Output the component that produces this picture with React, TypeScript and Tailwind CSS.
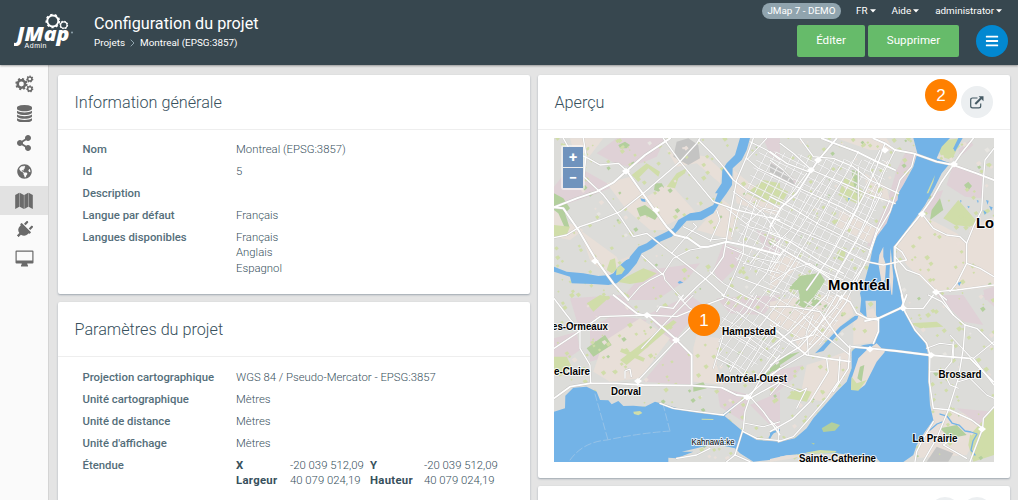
import React from 'react';
import { FaShareAlt, FaPlug, FaBars, FaGlobeAmericas } from 'react-icons/fa';

type Pt = string;

function Gear({ cx, cy, r, teeth, w }: { cx: number; cy: number; r: number; teeth: number; w: number }) {
  const unit = (2 * Math.PI * (r + w / 2)) / (teeth * 2);
  return (
    <g fill="none" stroke="currentColor">
      <circle cx={cx} cy={cy} r={r} strokeWidth={w} />
      <circle cx={cx} cy={cy} r={r + w / 2} strokeWidth={w * 0.95} strokeDasharray={`${unit} ${unit}`} />
    </g>
  );
}

function CogsIcon() {
  return (
    <svg width="19" height="18" viewBox="0 0 19 18" className="mb-[2px]">
      <Gear cx={6.4} cy={9} r={3.7} teeth={8} w={2.5} />
      <Gear cx={14.8} cy={4} r={2.1} teeth={7} w={1.5} />
      <Gear cx={14.8} cy={13.8} r={2.1} teeth={7} w={1.5} />
    </svg>
  );
}

function DatabaseIcon() {
  return (
    <svg width="15" height="17.5" viewBox="0 0 1536 1792" fill="currentColor">
      <path d="M768 768q237 0 443-43t325-127v170q0 69-103 128t-280 93.5-385 34.5-385-34.5-280-93.5-103-128v-170q119 84 325 127t443 43zm0 768q237 0 443-43t325-127v170q0 69-103 128t-280 93.5-385 34.5-385-34.5-280-93.5-103-128v-170q119 84 325 127t443 43zm0-384q237 0 443-43t325-127v170q0 69-103 128t-280 93.5-385 34.5-385-34.5-280-93.5-103-128v-170q119 84 325 127t443 43zm0-1152q208 0 385 34.5t280 93.5 103 128v128q0 69-103 128t-280 93.5-385 34.5-385-34.5-280-93.5-103-128v-128q0-69 103-128t280-93.5 385-34.5z" />
    </svg>
  );
}

function MapIcon() {
  return (
    <svg width="18" height="18" viewBox="0 0 18 18" fill="currentColor">
      <path d="M0.2 3 4.3.8v14L.2 17zM4.700.800 8.900 3v14l-4.200-2.200zM9.300 3 13.200.8v14L9.300 17zM13.600.8 17.8 3v14l-4.2-2.2z" />
    </svg>
  );
}

function DesktopIcon() {
  return (
    <svg width="19" height="17" viewBox="0 0 19 17" fill="currentColor">
      <path fillRule="evenodd" d="M1.6.5h15.8q1.1 0 1.1 1.1v10.8q0 1.1-1.1 1.1h-5.2q.2 1.3.8 2v1H6v-1q.6-.7.8-2H1.6Q.5 13.500.5 12.400V1.600Q.5.5 1.600.5zM1.700 1.700v8.800h15.600V1.700z" />
    </svg>
  );
}

function ExternalIcon() {
  return (
    <svg width="14" height="13" viewBox="0 0 14 13" fill="none" stroke="#455a64">
      <path d="M7.500 2H2.600Q.7 2 .7 3.900v6Q.7 11.800 2.600 11.800h6.200q1.900 0 1.900-1.900V7.500" strokeWidth="1.200" />
      <path d="M5.300 8 11 2.300" strokeWidth="2" />
      <path d="M8.600.3h4.900v4.900z" fill="#455a64" stroke="none" />
    </svg>
  );
}

function Logo() {
  return (
    <svg width="64" height="40" viewBox="0 0 64 40" className="text-white">
      <Gear cx={38.800} cy={9} r={5.500} teeth={9} w={1.900} />
      <Gear cx={49.800} cy={13} r={3.200} teeth={8} w={1.200} />
      <g fill="#fff" stroke="#37474f" strokeWidth="1.600" paintOrder="stroke" fontFamily="'Open Sans', sans-serif" fontWeight="800" fontStyle="italic">
        <text x="2.500" y="29" fontSize="20" textLength="53" lengthAdjust="spacingAndGlyphs">JMap</text>
      </g>
      <circle cx="58" cy="20.500" r="1" fill="#90a4ae" />
      <text x="10.500" y="36.300" fontSize="7" fill="#fff" fontFamily="'Liberation Sans', sans-serif" textLength="22">Admin</text>
    </svg>
  );
}

/* ---------- map ---------- */

const PINK = '#dfd1d6';
const BEIGE = '#e8dfd8';
const LIME = '#d0dda9';
const GREEN = '#b3cf9d';
const WATER = '#73b3e7';

const quadrants = [
  { x: 550, y: 130 },
  { x: 770, y: 130 },
  { x: 550, y: 295 },
  { x: 770, y: 295 },
];

const areas: [string, Pt][][] = [
  [
    [PINK, '200,25 345,25 320,80 285,95 235,110 195,100 140,70'],
    [PINK, '12,170 60,110 110,125 190,170 130,195 12,235'],
    [BEIGE, '60,25 160,25 110,90 70,60'],
    [BEIGE, '350,60 470,80 515,120 510,160 440,100 380,110'],
    [BEIGE, '170,160 240,140 330,240 350,300 300,300 230,240'],
    [BEIGE, '12,240 60,280 100,300 60,330 12,320'],
    [BEIGE, '90,300 200,380 230,450 180,440 120,390'],
    [BEIGE, '360,160 440,250 400,260 340,290 290,200'],
    [PINK, '290,420 450,400 410,450 320,510 210,510'],
    [PINK, '520,340 580,360 560,410 510,460 490,420'],
    [PINK, '620,300 690,330 690,380 640,360'],
    [PINK, '640,25 690,25 690,95 660,75'],
    [BEIGE, '550,120 600,160 690,210 690,260 560,220'],
    [BEIGE, '520,210 570,250 545,330 440,300'],
    ['#c4c4c3', '380,35 415,25 445,45 450,85 415,105 370,80'],
    [GREEN, '260,235 285,225 325,255 315,270 285,255 270,260'],
    [GREEN, '12,190 40,205 60,235 45,250 58,290 45,295 25,250 12,240'],
    [GREEN, '205,45 225,35 240,45 230,55 210,55'],
    [GREEN, '315,160 335,160 342,172 325,185 312,180'],
    [LIME, '245,135 290,100 330,125 325,140 295,115 260,150'],
    [LIME, '12,285 60,290 50,315 12,320'],
    [LIME, '350,170 380,130 410,115 405,130 385,145 375,175'],
    [LIME, '200,455 280,415 320,430 280,455 240,462'],
    [LIME, '590,190 640,150 690,160 690,225 640,215'],
    [LIME, '170,420 180,390 195,385 200,420 185,430'],
  ],
  [
    [PINK, '0,95 80,150 70,170 0,120'],
    ['#c4c4c3', '0,98 60,135 75,165 0,125'],
    [LIME, '0,160 55,185 35,220 0,215'],
    [PINK, '410,60 440,80 400,165 365,255 310,345 290,350 350,220 380,120'],
    [BEIGE, '200,25 350,25 370,60 300,60'],
    [LIME, '225,140 285,185 270,225 205,195'],
    [GREEN, '245,120 270,125 262,200 248,150'],
    [BEIGE, '285,130 350,170 360,215 290,200'],
    [BEIGE, '210,240 320,290 300,340 200,290'],
    [PINK, '550,100 640,135 635,205 585,200 530,165'],
    [PINK, '490,190 520,180 490,260 460,240'],
    [PINK, '565,60 600,30 610,45 570,80'],
    [LIME, '565,210 625,280 600,290 555,285 520,265'],
    [GREEN, '510,205 520,240 480,270 485,240'],
    [GREEN, '582,165 595,155 606,168 594,182'],
    [BEIGE, '455,255 560,310 595,340 600,290 672,260 672,470 500,490 410,405 380,350'],
    [LIME, '505,60 530,30 575,25 555,70 545,90 515,80'],
    [BEIGE, '495,80 520,75 528,105 500,115'],
    [GREEN, '55,475 90,440 150,430 165,455 130,510 90,510 85,480'],
    [LIME, '200,370 215,350 230,355 220,395 200,385'],
    [BEIGE, '0,400 70,370 90,405 40,450 0,480'],
    [PINK, '640,480 672,470 672,510 645,510'],
  ],
  [
    [PINK, '60,10 210,0 270,60 180,60 130,75 90,110'],
    [PINK, '290,60 420,0 460,30 380,130 430,180 425,270 280,260 370,150'],
    [PINK, '12,130 80,110 90,165 12,220'],
    [PINK, '120,100 190,60 290,75 220,170 120,200'],
    [BEIGE, '160,140 270,70 360,130 270,250 180,260 130,230'],
    [BEIGE, '440,120 510,130 500,210 520,270 430,260 430,160'],
    [PINK, '500,275 600,300 580,380 510,335'],
    [PINK, '500,10 690,0 640,60 540,55'],
    [LIME, '110,25 150,0 180,5 130,50'],
    [GREEN, '110,160 165,120 185,150 130,185'],
    [LIME, '210,195 370,75 380,82 230,210'],
    [LIME, '215,160 285,190 280,200 210,170'],
    [LIME, '12,185 50,185 65,215 30,245 12,230'],
    [GREEN, '430,270 460,262 470,280 430,290'],
    [PINK, '600,330 690,290 690,400 660,390'],
    [GREEN, '640,240 690,205 690,220 650,250'],
  ],
  [
    [BEIGE, '0,20 120,0 240,0 250,60 180,120 100,180 60,110 0,90'],
    [GREEN, '75,25 100,0 140,0 155,30 100,38'],
    [PINK, '0,230 100,210 70,250 0,310'],
    [BEIGE, '110,210 175,190 240,165 240,230 170,320 90,310'],
    [LIME, '50,310 80,280 125,290 110,320'],
    [GREEN, '0,220 50,180 90,170 30,210 0,235'],
    [BEIGE, '250,60 310,40 325,80 315,140 250,150'],
    [PINK, '500,0 580,0 640,90 580,80'],
    [BEIGE, '480,340 620,360 640,400 590,480 430,490'],
    [PINK, '560,340 670,350 630,390'],
    [GREEN, '510,400 560,390 590,420 540,430'],
    [LIME, '600,420 672,340 672,480 610,500 595,450'],
    ['#c4c4c3', '500,455 550,475 535,500 470,500'],
    [LIME, '420,85 500,80 520,95 450,100'],
    [PINK, '635,0 672,0 672,35'],
  ],
];

const roads: [number, Pt][][] = [
  [
    [3.200, '12,232 80,205 140,185 190,158 230,122 285,75 360,25'],
    [3.200, '12,232 40,235 85,300 135,385 190,460 235,510'],
    [3.200, '230,122 260,165 310,235 350,290 375,315 415,325 450,350 475,350 530,335 580,345 690,375'],
    [2, '40,25 60,60 115,85 150,105 205,100 230,122'],
    [2, '100,25 108,75 102,140 160,195 210,260 250,320 290,310 340,350 385,385 470,450 520,495'],
    [2, '12,323 50,315 90,290 150,270 210,245 280,190 390,95 440,40 450,25'],
    [2, '340,25 390,95 440,155 490,215 560,240 690,270'],
    [2, '445,30 490,75 520,110 550,150 590,180 690,235'],
    [2, '610,25 590,80 560,150 545,230 530,325 520,380 485,430 440,470 400,510'],
    [1.500, '590,85 625,115 690,145'],
    [1.500, '590,90 650,25'],
    [1.500, '600,35 650,60 690,90'],
    [1.500, '475,350 420,360 370,385 340,430 300,450 270,470 235,510'],
    [1.500, '340,430 345,450 400,510'],
    [1.500, '275,375 340,435'],
    [1.500, '365,370 400,330 440,290 430,280'],
    [1.500, '400,290 440,310 480,330 530,325'],
    [1.500, '480,425 520,460 580,495 610,510'],
    [1.500, '500,240 510,270 480,335'],
    [1.500, '575,210 560,260 545,320'],
    [1.500, '620,210 580,330 580,370 550,440 520,500'],
    [1.500, '530,235 600,290 690,315'],
    [1.500, '590,280 640,235 690,245'],
    [1.500, '550,185 640,250 690,320'],
    [1.500, '530,350 600,380 690,400'],
    [1.500, '670,270 640,350 600,400'],
    [1.500, '580,400 690,430'],
    [1.500, '690,330 650,430 600,490'],
    [1.500, '560,440 690,490'],
  ],
  [
    [3, '200,25 145,90 125,120 80,190 35,230 0,290'],
    [3, '155,25 180,35 260,65 320,95 375,120'],
    [3, '310,25 345,40 375,60 430,70 500,95 550,105 620,130 672,150'],
    [2, '90,25 130,80 190,85 250,110 300,150 385,190'],
    [2, '30,40 70,70 125,120 220,160 300,195 375,220'],
    [2, '0,65 50,100 115,125'],
    [2, '0,130 100,180 210,230 330,300'],
    [2, '0,200 60,230 150,285 300,360'],
    [2, '0,260 80,300 190,345 290,395'],
    [2, '0,310 60,335 160,400 220,430'],
    [2, '0,335 90,390 150,425 200,460'],
    [2, '345,40 320,110 280,200 230,290 180,380 110,480'],
    [1.500, '375,60 340,130 300,240 260,330 200,430 170,510'],
    [1.500, '330,60 300,120 330,170'],
    [1.500, '265,65 230,130 180,210 130,300 70,400 0,500'],
    [1.500, '220,95 160,190 100,280 30,380 0,430'],
    [1.500, '180,120 120,200 60,300 10,350'],
    [1.500, '110,130 50,210'],
    [1.500, '265,110 265,230 230,300'],
    [1.500, '335,190 300,260 250,350 180,470'],
    [1.500, '70,150 40,120 0,90'],
    [1.500, '360,210 320,300 290,390 230,510'],
    [2, '435,70 425,110 390,150 360,245 320,310 300,370 280,410 210,510'],
    [2.500, '610,25 570,75 550,105 515,155 490,200 455,250 410,305 375,350 375,410 400,510'],
    [2, '672,55 645,90 640,150 635,240 610,290 590,340 590,400 560,460 540,485'],
    [2, '455,250 490,295 530,315 570,320 590,340'],
    [2, '375,380 410,420 450,435 500,485 560,480 672,465'],
    [2, '590,400 630,415 672,440'],
    [2, '290,395 340,405 410,390 395,365 375,350'],
    [2, '500,485 530,510'],
    [1.500, '0,415 40,360 130,410 220,450'],
    [1.500, '0,460 60,420 120,400 180,440'],
  ],
  [
    [3, '190,0 260,55 300,65 375,130 425,180 425,270'],
    [3, '12,310 60,275 120,265 200,265 280,270 430,272 515,278 560,300 600,305'],
    [2, '12,10 50,60 90,110 90,160 120,210 122,265'],
    [2, '12,160 80,115 150,65 290,60 380,65 440,40 520,10'],
    [2, '460,60 375,140 265,255 262,270'],
    [1.500, '275,160 350,80 410,20 430,0'],
    [2, '320,50 330,35 370,40 400,0'],
    [1.500, '385,5 420,40 460,60 520,100 620,160'],
    [2, '515,0 560,20 640,60 690,95'],
    [2, '690,180 640,240 600,305 585,350 580,400 555,480'],
    [2, '600,305 640,350 690,420'],
    [2, '520,360 590,305 690,220'],
    [2, '600,310 690,260'],
    [1.500, '490,220 520,120 590,50 620,0'],
    [1.500, '500,190 560,220 600,260 690,240'],
    [1.500, '540,230 600,130 680,30'],
    [1.500, '580,240 640,140 690,80'],
    [1.500, '620,250 690,150'],
    [1.500, '530,100 600,130 680,190'],
    [1.500, '560,50 640,110 690,130'],
    [2, '580,410 620,430 690,437'],
    [1.500, '585,385 640,395 690,380'],
    [2, '380,490 440,480 480,460'],
    [2, '555,480 530,500'],
    [2, '555,480 600,500'],
    [2, '225,250 225,228 240,222 244,245'],
    [2, '330,325 370,340 440,350 520,360'],
  ],
  [
    [2.500, '200,0 240,20 260,55 290,70 325,75'],
    [3, '285,78 330,68 395,38 410,0'],
    [2.800, '245,155 300,160 380,168 475,180 600,190 670,260'],
    [2.300, '395,0 405,50 435,105 470,145 480,180 478,260 490,340 540,345 605,375 638,400 600,500'],
    [2.500, '325,70 325,110 310,145'],
    [2.500, '10,100 60,140 110,180 170,190 240,200'],
    [2, '0,90 60,140 130,120 200,0'],
    [2, '0,160 60,110 150,20 170,0'],
    [2, '0,210 90,155 200,30 215,0'],
    [2, '0,240 100,180 150,130 230,20'],
    [2, '170,190 175,230 120,320 70,370 0,410'],
    [2, '210,185 205,260 170,310 110,380 70,425 25,440'],
    [2, '240,150 235,220 190,290'],
    [2, '0,35 60,35 150,50 200,120 240,160'],
    [1.500, '100,65 160,120 240,180'],
    [1.500, '130,60 110,110 115,180'],
    [1.500, '0,300 30,265 0,250'],
    [1.500, '30,265 90,290 110,280 80,340'],
    [1.500, '25,435 25,400 0,375'],
    [2, '510,0 550,60 585,90 620,100 672,150'],
    [2, '475,0 515,20 550,60'],
    [1.500, '540,120 600,185 610,190 672,140'],
    [2, '405,40 460,40 490,0'],
    [2, '585,90 580,160 565,250 535,345 500,430 460,500'],
    [1.500, '470,160 510,145 550,150 550,190'],
    [1.500, '480,230 520,230 545,200 550,140'],
    [1.500, '565,260 600,250 650,300 672,310'],
    [1.500, '520,230 540,270 565,280'],
    [2, '672,335 640,370 638,400'],
    [2, '550,430 520,450 590,490'],
    [2, '490,380 460,430 440,470 435,500'],
    [2, '610,190 672,270'],
  ],
];

const waters: Pt[][] = [
  [
    '12,410 50,425 100,430 145,438 180,435 190,430 205,410 240,380 265,350 290,340 310,325 350,305 370,295 385,270 420,250 450,245 490,225 503,190 495,190 515,160 517,120 530,100 555,75 570,24 600,24 590,60 575,90 548,115 546,165 530,190 515,210 490,250 455,270 410,272 385,300 365,320 330,335 305,355 275,370 260,400 235,430 200,460 175,465 130,462 65,460 60,440 12,425',
    '271,205 285,208 287,216 275,214',
    '383,457 390,452 400,458 387,461',
  ],
  [
    '430,24 442,70 430,110 400,165 385,190 383,210 370,225 350,280 320,320 310,345 300,395 285,450 270,490 275,512 400,512 385,460 370,400 370,350 385,335 410,300 440,260 465,225 495,170 515,130 540,100 500,85 515,50 540,24',
    '565,24 578,24 555,65 550,55',
    '570,210 575,212 572,218', '620,210 626,212 624,220', '648,210 656,212 653,224', '657,228 668,232 664,242', '592,227 600,230 595,235', '640,240 650,248 644,254', '234,203 240,205 236,213', '562,458 574,455 568,468',
  ],
  [
    '12,350 45,340 46,302 70,278 110,275 140,290 150,315 175,316 185,328 205,318 220,333 250,332 285,335 315,320 350,330 400,345 470,355 520,360 580,410 620,435 690,440 690,491 610,500 570,475 555,460 520,452 480,450 430,462 395,470 430,470 380,490 355,488 355,501 12,501',
    '515,360 560,325 562,328 525,362', '655,430 665,410 690,402 690,408 670,415 660,432',
  ],
  [
    '275,-1 270,50 290,68 285,0 318,-1 318,60 325,75 325,110 315,145 280,150 255,160 245,170 245,220 230,260 200,290 165,330 130,370 110,400 75,430 30,440 0,440 0,490 60,480 110,475 200,475 240,480 320,490 330,501 400,501 430,480 440,450 465,410 490,375 480,330 475,250 475,180 465,140 430,100 410,60 400,25 395,-1',
    '150,160 210,95 255,62 265,62 262,72 215,105 160,168 135,175',
    '0,412 22,405 5,420 0,420',
  ],
];

const islands: [string, Pt][][] = [
  [[LIME, '200,415 212,405 225,418 215,432 198,436'], ['#e6ddd6', '208,390 240,378 238,386 215,395']],
  [
    [BEIGE, '340,350 328,375 325,400 335,460 345,450 348,405 340,380'],
    [BEIGE, '362,355 358,440 366,510 370,440'],
    [LIME, '470,190 495,135 490,155 475,190'],
  ],
  [[LIME, '250,350 270,348 277,354 265,361 252,357'], [LIME, '455,371 490,372 490,375 455,374']],
  [
    [BEIGE, '265,190 290,165 320,145 345,170 320,200 300,240 285,270 265,285 243,285 245,250'],
    [GREEN, '270,215 283,210 275,260 262,250'],
    [LIME, '245,245 260,265 290,255 265,287 243,285'],
    [GREEN, '155,400 185,382 210,390 195,407 160,411'],
    [LIME, '105,473 150,465 200,468 195,473 130,476'],
    [BEIGE, '0,492 50,481 100,480 70,490 0,501'],
    [GREEN, '123,443 134,445 132,449'],
  ],
];

function buildSpecks() {
  let seed = 71;
  const rnd = () => {
    seed = (seed * 16807) % 2147483647;
    return seed / 2147483647;
  };
  return Array.from({ length: 820 }, () => {
    const x = 554 + rnd() * 440;
    const y = 138 + rnd() * 324;
    const s = 1.100 + rnd() * 2.400;
    const t = rnd();
    const d = `M${x} ${y}l${s} ${-s * 0.6}l${s * 0.7} ${s * 0.8}l${-s * 0.9} ${s * 0.8}z`;
    return { d, c: t < 0.72 ? LIME : t < 0.82 ? GREEN : t < 0.94 ? '#e9dfd9' : '#e7e5e1' };
  });
}
const specks = buildSpecks();

function gridLines(x: number, y: number, w: number, h: number, slope: number, gap: number) {
  const steps = Math.ceil((h + Math.abs(slope) * w) / gap);
  const start = slope > 0 ? y - slope * w : y;
  return Array.from({ length: steps }, (_, i) => `M${x} ${start + i * gap}l${w} ${slope * w}`).join('');
}
const streets = [
  { clip: 'city-n', d: gridLines(730, 138, 180, 170, 0.5, 9) + gridLines(730, 138, 180, 170, -1.900, 17), o: 0.75 },
  { clip: 'city-s', d: gridLines(715, 290, 135, 110, -1.350, 14) + gridLines(715, 290, 135, 110, 0.600, 13), o: 0.75 },
];

const streams = [
  '940,414 947,416 952,423 959,425 965,431 971,432 977,434 973,441 971,450 975,455',
  '930,430 937,424 942,422',
];

const labels: [string, number, number, number, number][] = [
  ['Montréal', 828, 290, 14, 62],
  ['Lo', 976, 227.500, 14, 18],
  ['es-Ormeaux', 552, 330, 10.500, 56],
  ['Hampstead', 722, 335, 10.500, 54],
  ['e-Claire', 554, 375, 10.500, 36],
  ['Dorval', 611, 394.500, 10.500, 30],
  ['Montréal-Ouest', 716, 382, 10.500, 71],
  ['Brossard', 938.500, 378, 10.500, 43],
  ['La Prairie', 912.500, 442, 10.500, 45],
  ['Sainte-Catherine', 799, 461.500, 10.500, 77],
];

function CityMap() {
  return (
    <svg width="440" height="324" viewBox="554 138 440 324" className="block" strokeLinejoin="round" strokeLinecap="round">
      <clipPath id="city-n"><polygon points="760,150 850,160 890,160 875,215 860,270 835,300 790,300 735,260 745,190" /></clipPath>
      <clipPath id="city-s"><polygon points="725,300 765,290 845,290 838,320 820,345 790,350 740,372 715,365" /></clipPath>
      <rect x="554" y="138" width="440" height="324" fill="#dcdcd9" />
      {quadrants.map((q, i) => (
        <g key={i} transform={`translate(${q.x} ${q.y}) scale(.33333)`}>
          {areas[i].map(([c, p], k) => <polygon key={k} points={p} fill={c} />)}
        </g>
      ))}
      {specks.map((s, i) => <path key={i} d={s.d} fill={s.c} />)}
      {streets.map((s) => (
        <g key={s.clip} clipPath={`url(#${s.clip})`} fill="none" opacity={s.o}>
          <path d={s.d} stroke="#cbcac8" strokeWidth="1.700" />
          <path d={s.d} stroke="#fff" strokeWidth="1" />
        </g>
      ))}
      <path d="M789 289L800 276 820 273 825 281 813 298 800 303 799 290Z" fill={GREEN} />
      {quadrants.map((q, i) => (
        <g key={i} transform={`translate(${q.x} ${q.y}) scale(.33333)`}>
          {waters[i].map((p, k) => <polygon key={k} points={p} fill={WATER} />)}
          {islands[i].map(([c, p], k) => <polygon key={k} points={p} fill={c} />)}
        </g>
      ))}
      {streams.map((p) => <polyline key={p} points={p} fill="none" stroke={WATER} strokeWidth="1.300" />)}
      <g fill="none" stroke="#a5c9e6" strokeWidth=".7" strokeDasharray="7 3">
        <path d="M570 460Q583 442 607 440Q640 433 671 431" />
        <path d="M595 394L608 440M663 404L670 431" />
      </g>
      {['#c6c5c3', '#ffffff'].map((c, pass) =>
        quadrants.map((q, i) => (
          <g key={c + i} transform={`translate(${q.x} ${q.y}) scale(.33333)`} fill="none" stroke={c}>
            {roads[i].map(([w, p], k) => (
              <polyline key={k} points={p} strokeWidth={w * 1.700 + (pass === 0 ? 2.800 : 0.600)} />
            ))}
          </g>
        ))
      )}
      <g fill="#fff">
        {['595,261', '626,171', '656,210', '818,160', '811,170', '885,150', '922,214', '954,164', '647,315', '676,340', '870,349', '903,308', '931,355', '936,292', '982,429', '747,397', '638,381'].map((p) => {
          const [x, y] = p.split(',').map(Number);
          return <path key={p} d={`M${x - 4} ${y}L${x} ${y - 3}L${x + 4} ${y}L${x} ${y + 3.500}z`} />;
        })}
      </g>
      <g fontFamily="'Liberation Sans', Arial, sans-serif" fontWeight="700" stroke="#fff" strokeOpacity=".8" strokeWidth="2" paintOrder="stroke" fill="#000">
        {labels.map(([t, x, y, s, w]) => (
          <text key={t} x={x} y={y} fontSize={s} textLength={w} lengthAdjust="spacingAndGlyphs">{t}</text>
        ))}
        <text x="691.500" y="445" fontSize="8.500" fontWeight="400" textLength="43" lengthAdjust="spacingAndGlyphs">Kahnawà:ke</text>
      </g>
    </svg>
  );
}

/* ---------- page ---------- */

function Card({ title, className = '', children, action }: { title: string; className?: string; children: React.ReactNode; action?: React.ReactNode }) {
  return (
    <section className={`rounded-[2px] bg-white shadow-[0_1px_2px_rgba(70,90,110,0.45)] ${className}`}>
      <div className="flex h-[55px] items-center justify-between border-b border-[#eeeeee] pr-[17px] pl-[16.500px]">
        <h2 className="pt-[2px] text-[16.200px] font-light text-[#37505c]">{title}</h2>
        {action}
      </div>
      {children}
    </section>
  );
}

function Row({ label, children }: { label: string; children?: React.ReactNode }) {
  return (
    <div className="flex min-h-[22px] text-[11.330px] leading-[15.300px]">
      <dt className="w-[153.500px] shrink-0 font-medium text-[#546e7a]">{label}</dt>
      <dd className="font-light text-[#37505c]">{children}</dd>
    </div>
  );
}

function Menu({ text, className }: { text: string; className: string }) {
  return (
    <span className={`flex items-center gap-[2px] ${className}`}>
      {text}
      <svg width="6" height="4" viewBox="0 0 6 4" fill="currentColor"><path d="M0 .3h6L3 3.500z" /></svg>
    </span>
  );
}

const nav = [
  <CogsIcon />,
  <DatabaseIcon />,
  <FaShareAlt size={16} />,
  <FaGlobeAmericas size={15} />,
  <MapIcon />,
  <FaPlug size={18} className="rotate-45" />,
  <DesktopIcon />,
];

export default function App() {
  return (
    <div className="flex h-[500px] w-[1018px] flex-col overflow-hidden bg-[#e4e4e4] font-['Roboto',sans-serif]">
      <header className="z-10 flex h-[65px] shrink-0 bg-[#37474f] text-white shadow-[0_1px_2px_rgba(0,0,0,0.35)]">
        <div className="w-[94px] pt-[12px] pl-[14px]"><Logo /></div>
        <div className="flex-1 pt-[13px]">
          <h1 className="text-[16.200px] leading-[22px]">Configuration du projet</h1>
          <div className="mt-[1px] flex items-center text-[9.900px] leading-[14px]">
            Projets
            <svg width="5" height="8" viewBox="0 0 5 8" className="mx-[5px]" fill="none" stroke="#90a4ae"><path d="M.7.7 4 4 .7 7.300" /></svg>
            Montreal (EPSG:3857)
          </div>
        </div>
        <div className="flex flex-col items-end pr-[10px]">
          <div className="mt-[3px] flex h-[16px] items-center pr-[6px] text-[9.900px]">
            <span className="flex h-[16px] w-[79px] items-center justify-center rounded-full bg-[#90a4ae]">JMap 7 - DEMO</span>
            <Menu text="FR" className="ml-[15px]" />
            <Menu text="Aide" className="ml-[16px]" />
            <Menu text="administrator" className="ml-[16px]" />
          </div>
          <div className="mt-[6px] flex h-[32px] text-[11.600px]">
            <button className="mr-[3px] w-[68px] rounded-[2px] bg-[#66bb6a]">Éditer</button>
            <button className="mr-[17px] w-[91px] rounded-[2px] bg-[#66bb6a]">Supprimer</button>
            <button className="flex h-[32px] w-[32px] items-center justify-center rounded-full bg-[#0288d1]"><FaBars size={14} /></button>
          </div>
        </div>
      </header>
      <div className="flex min-h-0 flex-1">
        <nav className="w-[49px] shrink-0 border-r border-[#d4d4d4] bg-[#fafafa] pt-[5px] text-[#6a6a6a]">
          {nav.map((icon, i) => (
            <div key={i} className={`flex h-[29px] items-center justify-center ${i === 4 ? 'bg-[#e2e2e2]' : ''}`}>{icon}</div>
          ))}
        </nav>
        <main className="flex flex-1 gap-[8px] pt-[10px] pl-[9px]">
          <div className="flex w-[472px] flex-col gap-[8px]">
            <Card title="Information générale" className="h-[219px] shrink-0">
              <dl className="pt-[12px] pl-[24.500px]">
                <Row label="Nom">Montreal (EPSG:3857)</Row>
                <Row label="Id">5</Row>
                <Row label="Description" />
                <Row label="Langue par défaut">Français</Row>
                <Row label="Langues disponibles">Français<br />Anglais<br />Espagnol</Row>
              </dl>
            </Card>
            <Card title="Paramètres du projet" className="h-[240px] shrink-0">
              <dl className="pt-[12.700px] pl-[24.500px]">
                <Row label="Projection cartographique">WGS 84 / Pseudo-Mercator - EPSG:3857</Row>
                <Row label="Unité cartographique">Mètres</Row>
                <Row label="Unité de distance">Mètres</Row>
                <Row label="Unité d'affichage">Mètres</Row>
                <Row label="Étendue">
                  <div className="grid grid-cols-[54px_80px_54px_80px]">
                    <b className="font-bold tracking-[0.3px]">X</b><span>-20 039 512,09</span>
                    <b className="font-bold tracking-[0.3px]">Y</b><span>-20 039 512,09</span>
                    <b className="font-bold tracking-[0.3px]">Largeur</b><span>40 079 024,19</span>
                    <b className="font-bold tracking-[0.3px]">Hauteur</b><span>40 079 024,19</span>
                  </div>
                </Row>
              </dl>
            </Card>
          </div>
          <div className="flex w-[472px] flex-col gap-[8px]">
            <Card
              title="Aperçu"
              className="h-[403px] shrink-0"
              action={
                <div className="relative flex h-[32px] w-[32px] items-center justify-center rounded-full bg-[#eceff1]">
                  <ExternalIcon />
                  <span className="absolute top-[-7px] left-[-36px] flex h-[32px] w-[32px] items-center justify-center rounded-full bg-[#ff8000] pt-px font-['Liberation_Sans',sans-serif] text-[17px] text-white">2</span>
                </div>
              }
            >
              <div className="relative mt-[8px] ml-[16px] w-[440px]">
                <CityMap />
                <div className="absolute top-[7px] left-[7px] flex flex-col gap-px rounded-[3px] bg-white/50 p-[2px]">
                  {['+', '−'].map((s) => (
                    <button key={s} className="flex h-[20px] w-[20px] items-center justify-center bg-[#7093bd] text-[15px] leading-none font-bold text-white">{s}</button>
                  ))}
                </div>
                <span className="absolute top-[166px] left-[134px] flex h-[32px] w-[32px] items-center justify-center rounded-full bg-[#ff8000] pt-px font-['Liberation_Sans',sans-serif] text-[17px] text-white">1</span>
              </div>
            </Card>
            <section className="h-[60px] shrink-0 overflow-hidden rounded-[2px] bg-white pt-[11px] pr-[17px] shadow-[0_1px_2px_rgba(70,90,110,0.45)]">
              <div className="flex justify-end">
                <div className="h-[32px] w-[32px] rounded-full bg-[#eceff1]" />
                <div className="h-[32px] w-[32px] rounded-full bg-[#eceff1]" />
              </div>
            </section>
          </div>
        </main>
      </div>
    </div>
  );
}
